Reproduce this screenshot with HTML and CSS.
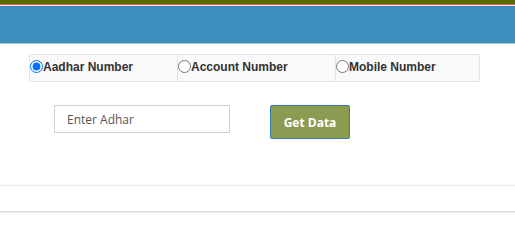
FILE: index.html
```html
<!DOCTYPE html>
<html>
<head>
<meta charset="utf-8">
<link rel="stylesheet" href="styles.css">
</head>
<body>
<header class="topbar">
  <div class="olive"></div>
  <div class="red"></div>
  <div class="gap"></div>
  <div class="blue"></div>
</header>
<main class="content">
  <div class="options">
    <label class="opt opt-1"><input type="radio" name="t" checked>Aadhar Number</label>
    <label class="opt opt-2"><input type="radio" name="t">Account Number</label>
    <label class="opt opt-3"><input type="radio" name="t">Mobile Number</label>
  </div>
  <div class="form-row">
    <input class="field" type="text" placeholder="Enter Adhar">
    <button class="btn">Get Data</button>
  </div>
</main>
<div class="rule rule-1"></div>
<div class="rule rule-2"></div>
</body>
</html>
```
FILE: styles.css
```css
* { box-sizing: border-box; }
html, body { margin: 0; padding: 0; background: #fff; }
body { width: 515px; height: 221px; overflow: hidden; font-family: "Liberation Sans", Arial, sans-serif; }

.topbar { display: flex; flex-direction: column; }
.olive { height: 4px; background: #5a6b00; }
.red { height: 1px; background: #e0604a; }
.gap { height: 1px; background: #e8eef2; }
.blue { height: 38px; background: #3d8dbd; border-bottom: 1px solid #a9c2d2; }

.content { padding: 10px 0 0 29px; height: 141px; }
.options {
  display: grid;
  grid-template-columns: 147px 158px 144px;
  width: 451px;
  height: 28px;
  border: 1px solid #e3e3e3;
  background: #f9f9f9;
}
.opt {
  display: flex;
  align-items: flex-start;
  padding-top: 5px;
  font-size: 12px;
  font-weight: bold;
  color: #333;
  border-left: 1px solid #e3e3e3;
  line-height: 14px;
}
.opt-1 { border-left: none; }
.opt input { margin: 0; width: 13px; height: 13px; }

.form-row { display: flex; align-items: flex-start; padding: 23px 0 0 25px; }
.field {
  width: 176px;
  height: 28px;
  border: 1px solid #cfd0d8;
  padding: 0 12px;
  font-family: "Open Sans", sans-serif;
  font-size: 12px;
  color: #555;
  outline: none;
}
.field::placeholder { color: #555; }
.btn {
  margin-left: 40px;
  width: 80px;
  height: 34px;
  background: #8c9b52;
  border: 1px solid #3a7aa6;
  border-radius: 2px;
  color: #fff;
  font-family: "Open Sans", sans-serif;
  font-weight: bold;
  font-size: 12px;
  padding: 0;
}

.rule { height: 1px; }
.rule-1 { background: #ececec; }
.rule-2 { margin-top: 25px; height: 2px; background: #dcdcdc; border-bottom: 1px solid #ececec; }
```
